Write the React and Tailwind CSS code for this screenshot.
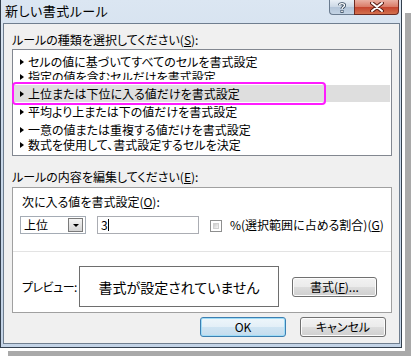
import React from "react";

const rules = [
  { text: "セルの値に基づいてすべてのセルを書式設定", h: "h-[15px]" },
  { text: "指定の値を含むセルだけを書式設定", h: "h-[16px]", clip: true },
  { text: "上位または下位に入る値だけを書式設定", h: "h-[17px]", selected: true },
  { text: "平均より上または下の値だけを書式設定", h: "h-[19px]" },
  { text: "一意の値または重複する値だけを書式設定", h: "h-[17px]" },
  { text: "数式を使用して、書式設定するセルを決定", h: "h-[14px]" },
];

const Bullet = () => (
  <span className="inline-block w-0 h-0 border-y-[3px] border-y-transparent border-l-[4px] border-l-black mr-[4px] shrink-0" />
);

const WinButton = ({ children, def, className = "" }) => (
  <button
    className={
      "h-[20px] rounded-[3px] border text-[12px] leading-[14px] text-black whitespace-nowrap " +
      (def
        ? "border-[#3c7fb1] shadow-[inset_0_0_0_1px_#9fdcf7] bg-[linear-gradient(#eef6fb_0%,#e3eff7_50%,#cfe4f2_50%,#c4dcee_100%)] "
        : "border-[#707070] shadow-[inset_0_0_0_1px_#fcfcfc] bg-[linear-gradient(#f2f2f2_0%,#ebebeb_50%,#dddddd_50%,#cfcfcf_100%)] ") +
      className
    }
  >
    {children}
  </button>
);

export default function App() {
  return (
    <div className="relative w-[411px] h-[356px] bg-white overflow-hidden font-['Noto_Sans_CJK_JP','Noto_Sans',sans-serif] [font-feature-settings:'palt'] text-[12px] leading-[14px] text-black">
      {/* drop shadow */}
      <div className="absolute left-[8px] top-[13px] w-[403px] h-[343px] bg-[#a9a9a9]" />

      {/* window */}
      <div className="relative w-[402px] h-[348px] flex flex-col border-x border-b border-[#34404e] bg-[linear-gradient(180deg,#dbe6f2,#c9d8e9_40%,#c3d3e6)] pl-[2px] pr-[1px] pb-[3px] shadow-[3px_3px_0_#ffffff]">
        {/* title bar */}
        <div className="h-[23px] flex items-start shrink-0">
          <div className="pl-[2px] pt-[3px] text-[13px] leading-[15px] tracking-[0.5px] whitespace-nowrap">新しい書式ルール</div>
          <div className="ml-auto flex mr-[1px]">
            <div className="w-[25px] h-[15px] border border-[#6a7b8f] border-t-0 border-r-0 rounded-bl-[4px] bg-[linear-gradient(#e9eff6,#ccd8e6_50%,#b3c4d8_50%,#c3d3e4)] flex items-center justify-center">
              <svg width="8" height="11" viewBox="0 0 8 11">
                <path d="M1.5 3.2 C1.5 1.2 6.5 1 6.5 3.4 C6.5 5 4 5 4 7" fill="none" stroke="#33465c" strokeWidth="3" />
                <path d="M1.5 3.2 C1.5 1.2 6.5 1 6.5 3.4 C6.5 5 4 5 4 7" fill="none" stroke="#ffffff" strokeWidth="1.4" />
                <rect x="2.5" y="8" width="3" height="3" fill="#33465c" />
                <rect x="3.2" y="8.6" width="1.6" height="1.6" fill="#ffffff" />
              </svg>
            </div>
            <div className="w-[45px] h-[15px] border border-[#6d2b22] border-t-0 rounded-br-[4px] bg-[linear-gradient(#eab0a3,#d97a66_50%,#c5432d_50%,#d2704e)] flex items-center justify-center">
              <svg width="14" height="10" viewBox="0 0 14 10">
                <path d="M2 1 L12 9 M12 1 L2 9" stroke="#5a1e16" strokeWidth="4" strokeLinecap="round" />
                <path d="M2 1 L12 9 M12 1 L2 9" stroke="#ffffff" strokeWidth="2" strokeLinecap="round" />
              </svg>
            </div>
          </div>
        </div>

        {/* client area */}
        <div className="flex-1 border border-[#6f7e8f] bg-[#f0f0f0] pl-[8px] flex flex-col">
          <div className="mt-[9px] h-[14px] whitespace-nowrap">
            ルールの種類を選択してください(<u>S</u>):
          </div>

          {/* rule list */}
          <div className="relative mt-[2px] w-[380px] h-[107px] border border-[#828790] bg-white pt-[4px]">
            {rules.map((r) => (
              <div
                key={r.text}
                className={
                  "flex items-center pl-[7px] whitespace-nowrap " + r.h + (r.selected ? " bg-[#dedede] mr-[1px]" : "")
                }
              >
                {r.clip ? (
                  <div className="flex items-start h-[16px] pt-[1px]">
                    <div className="h-[10px] overflow-hidden flex items-start">
                      <span className="mt-[4px] mr-[4px] inline-block w-0 h-0 border-y-[3px] border-y-transparent border-l-[4px] border-l-black" />
                      <span className="leading-[14px]">{r.text}</span>
                    </div>
                  </div>
                ) : (
                  <>
                    <Bullet />
                    <span>{r.text}</span>
                  </>
                )}
              </div>
            ))}
            <div className="absolute left-[-1px] top-[32px] w-[314px] h-[23px] border-2 border-[#ff1cff] rounded-[4px]" />
          </div>

          <div className="mt-[14px] h-[14px] whitespace-nowrap">
            ルールの内容を編集してください(<u>E</u>):
          </div>

          {/* rule edit group */}
          <div className="mt-[3px] w-[380px] h-[126px] border border-[#a0a0a0] bg-white flex flex-col">
            <div className="mt-[7px] pl-[9px] h-[14px] whitespace-nowrap">
              次に入る値を書式設定(<u>O</u>):
            </div>
            <div className="mt-[7px] pl-[7px] flex items-center h-[18px] whitespace-nowrap">
              <div className="w-[66px] h-[18px] border border-[#a5acb5] bg-white flex items-center pl-[3px]">
                <span>上位</span>
                <div className="ml-auto mr-[2px] w-[15px] h-[14px] border border-[#7a7a7a] bg-[linear-gradient(#f4f4f4,#d4d4d4)] flex items-center justify-center">
                  <span className="w-0 h-0 border-x-[3px] border-x-transparent border-t-[3px] border-t-black mt-[1px]" />
                </div>
              </div>
              <div className="ml-[11px] w-[102px] h-[18px] border border-[#abadb3] bg-white flex items-center pl-[3px]">
                <span>3</span>
                <span className="w-px h-[12px] bg-black" />
              </div>
              <div className="ml-[11px] w-[12px] h-[12px] mt-[2px] border border-[#8e8f8f] bg-white p-[2px]">
                <div className="w-full h-full bg-[linear-gradient(135deg,#cbcbcb,#f6f6f6)] border border-[#d0d0d0]" />
              </div>
              <div className="ml-[8px]">
                %(選択範囲に占める割合)(<u>G</u>)
              </div>
            </div>
            <div className="mt-[17px] h-px bg-[#e3e3e3]" />
            <div className="mt-[14px] pl-[9px] flex items-center">
              <div className="w-[57px] whitespace-nowrap tracking-[-0.5px]">プレビュー:</div>
              <div className="w-[200px] h-[41px] border border-[#6e6e6e] bg-white flex items-center justify-center text-[14px] leading-[16px] whitespace-nowrap">
                書式が設定されていません
              </div>
              <WinButton className="ml-[13px] w-[85px]">
                書式(<u>F</u>)...
              </WinButton>
            </div>
          </div>

          <div className="mt-[4px] w-[380px] flex justify-end pr-[6px] gap-[14px]">
            <WinButton def className="w-[86px]">
              OK
            </WinButton>
            <WinButton className="w-[86px]">キャンセル</WinButton>
          </div>
        </div>
      </div>
    </div>
  );
}
